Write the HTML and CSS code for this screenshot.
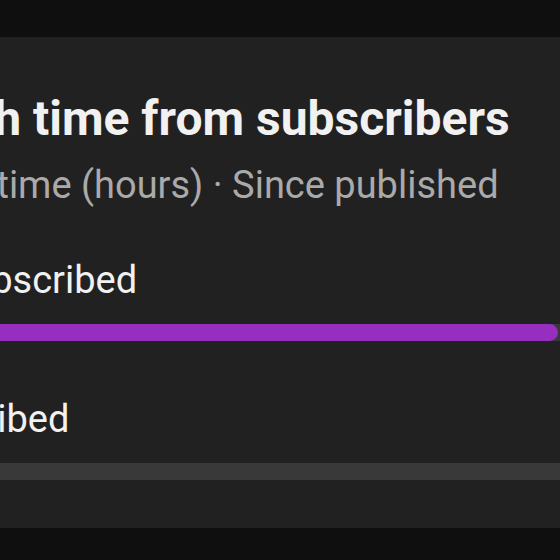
FILE: index.html
```html
<!doctype html>
<html lang="en">
<head>
  <meta charset="utf-8">
  <title>Watch time from subscribers</title>
  <link rel="stylesheet" href="styles.css">
</head>
<body>

<div class="topbar"></div>

<div class="card">
  <h2 class="card-title">Watch time from subscribers</h2>
  <p class="card-sub">Watch time (hours) &middot; Since published</p>

  <div class="row">
    <div class="row-label">Not subscribed</div>
    <div class="track"><div class="fill" style="width: 678px"></div></div>
  </div>

  <div class="row">
    <div class="row-label">Subscribed</div>
    <div class="track"><div class="fill" style="width: 4px"></div></div>
  </div>
</div>

</body>
</html>
```

FILE: styles.css
```css
html {
  height: 100%;
}

body {
  margin: 0;
  padding: 0;
  background: #0f0f0f;
  color: #f1f1f1;
  font-family: Roboto, "Noto Sans", sans-serif;
  overflow: hidden;
  height: 100%;
}

.topbar {
  height: 37px;
}

.card {
  background: #212121;
  margin-left: -120px;
  width: 800px;
  padding: 54px 0 48px 0;
}

.card-title {
  margin: 0;
  padding-left: 6px;
  font-size: 48px;
  line-height: 56px;
  font-weight: 700;
}

.card-sub {
  margin: 14px 0 0 0;
  font-size: 38px;
  line-height: 48px;
  color: #aaaaaa;
}

.row {
  margin-top: 47px;
}

.row + .row {
  margin-top: 54px;
}

.row-label {
  font-size: 38px;
  line-height: 48px;
}

.track {
  margin-top: 20px;
  height: 17px;
  background: #393939;
}

.fill {
  height: 100%;
  background: #962fbf;
  border-radius: 0 9px 9px 0;
}
```
